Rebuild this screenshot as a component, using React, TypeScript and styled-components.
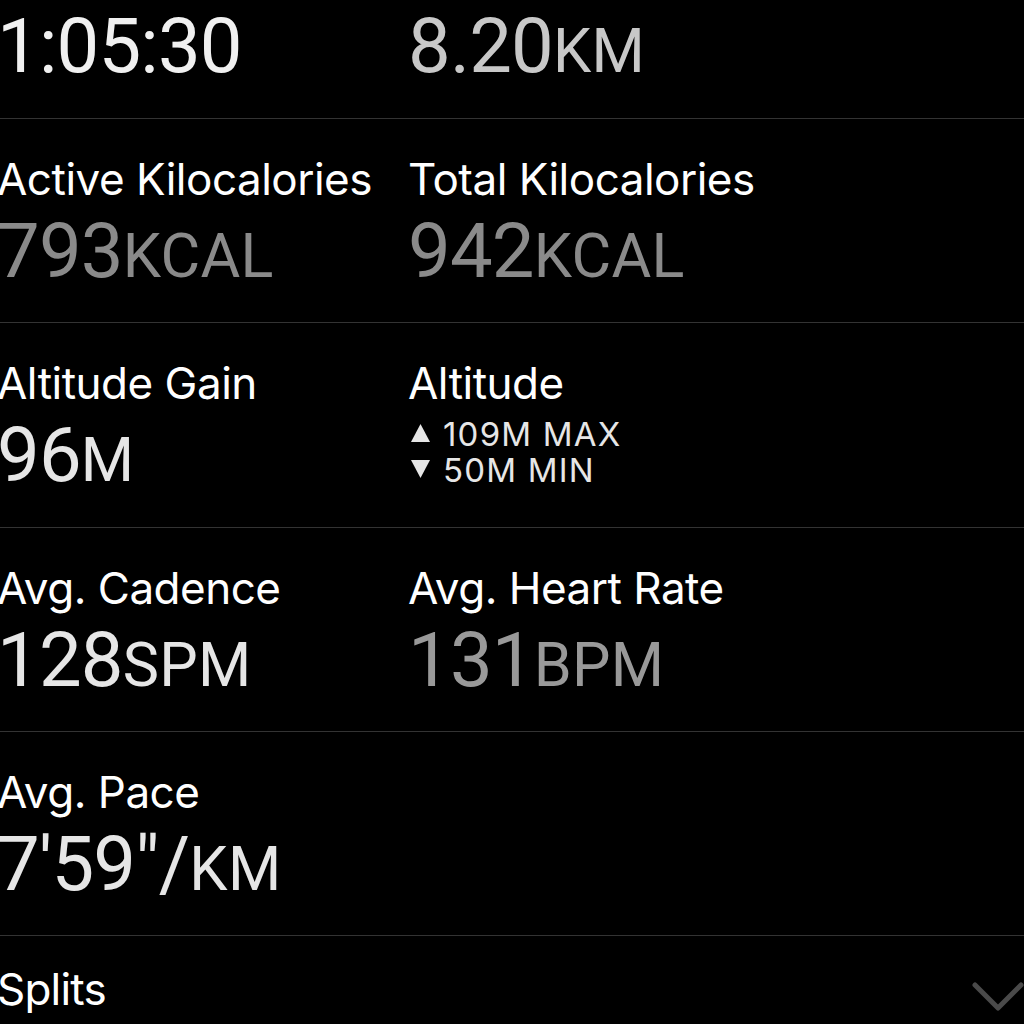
import styled, { createGlobalStyle } from "styled-components";

const GlobalStyle = createGlobalStyle`
    html, body {
        margin: 0;
        padding: 0;
        background: #000;
        overflow: hidden;
    }
    body {
        font-family: Inter, "Liberation Sans", sans-serif;
        -webkit-font-smoothing: antialiased;
    }
`;

const Page = styled.div`
    width: 1027px;
    margin-left: -3px;
    background: #000;
    color: #fff;
`;

const Row = styled.div<{ $first?: boolean }>`
    box-sizing: border-box;
    display: grid;
    grid-template-columns: 411px 1fr;
    height: ${(p) => (p.$first ? "119px" : "204.25px")};
    padding-top: ${(p) => (p.$first ? "8px" : "38px")};
    border-bottom: 1px solid #333;
`;

const Cell = styled.div`
    display: flex;
    flex-direction: column;
`;

const Label = styled.div`
    font-size: 44px;
    line-height: 45px;
    height: 45px;
    letter-spacing: -0.5px;
    color: #fff;
    white-space: nowrap;
`;

const Value = styled.div<{ $color: string; $spaced?: boolean }>`
    margin-top: ${(p) => (p.$spaced ? "11px" : "0")};
    font-family: Roboto, "Liberation Sans", sans-serif;
    font-size: 76px;
    line-height: 1;
    font-weight: 400;
    letter-spacing: -0.8px;
    color: ${(p) => p.$color};
    white-space: nowrap;
`;

const Unit = styled.span`
    font-size: 61px;
    letter-spacing: 0.3px;
`;

const Range = styled.div`
    margin-top: 10px;
    display: flex;
    flex-direction: column;
`;

const RangeLine = styled.div`
    display: flex;
    align-items: center;
    gap: 12px;
    height: 36px;
    font-size: 33px;
    line-height: 34px;
    letter-spacing: 1.2px;
    color: #e6e6e6;
    white-space: nowrap;
`;

const Arrow = styled.svg`
    width: 21px;
    height: 20px;
    flex: none;
    margin-left: 2px;
    margin-top: -3px;
`;

const SplitsRow = styled.div`
    display: flex;
    align-items: flex-start;
    justify-content: space-between;
    padding-top: 31px;
`;

const SplitsTitle = styled.div`
    font-size: 44px;
    line-height: 45px;
    letter-spacing: -0.8px;
    color: #fff;
`;

const Chevron = styled.svg`
    width: 54px;
    height: 34px;
    margin-top: 12px;
    margin-right: -1px;
`;

type Metric = {
    label?: string;
    value: string;
    unit?: string;
    color: string;
};

const Stat = ({ label, value, unit, color }: Metric) => (
    <Cell>
        {label && <Label>{label}</Label>}
        <Value $color={color} $spaced={!!label}>
            {value}
            {unit && <Unit>{unit}</Unit>}
        </Value>
    </Cell>
);

const App = () => {
    return (
        <Page>
            <GlobalStyle />
            <Row $first>
                <Stat value="1:05:30" color="#f0f0f0" />
                <Stat value="8.20" unit="KM" color="#c8c8c8" />
            </Row>
            <Row>
                <Stat label="Active Kilocalories" value="793" unit="KCAL" color="#8a8a8a" />
                <Stat label="Total Kilocalories" value="942" unit="KCAL" color="#8a8a8a" />
            </Row>
            <Row>
                <Stat label="Altitude Gain" value="96" unit="M" color="#e6e6e6" />
                <Cell>
                    <Label>Altitude</Label>
                    <Range>
                        <RangeLine>
                            <Arrow viewBox="0 0 21 20">
                                <path d="M10.5 1 L20 19 L1 19 Z" fill="#e6e6e6" />
                            </Arrow>
                            109M MAX
                        </RangeLine>
                        <RangeLine>
                            <Arrow viewBox="0 0 21 20">
                                <path d="M1 1 L20 1 L10.5 19 Z" fill="#e6e6e6" />
                            </Arrow>
                            50M MIN
                        </RangeLine>
                    </Range>
                </Cell>
            </Row>
            <Row>
                <Stat label="Avg. Cadence" value="128" unit="SPM" color="#e6e6e6" />
                <Stat label="Avg. Heart Rate" value="131" unit="BPM" color="#999" />
            </Row>
            <Row>
                <Stat label="Avg. Pace" value={"7'59\"/"} unit="KM" color="#e6e6e6" />
                <Cell />
            </Row>
            <SplitsRow>
                <SplitsTitle>Splits</SplitsTitle>
                <Chevron viewBox="0 0 54 34">
                    <path
                        d="M4 6 L27 29 L50 6"
                        fill="none"
                        stroke="#4a4a4a"
                        strokeWidth="5"
                        strokeLinecap="round"
                        strokeLinejoin="round"
                    />
                </Chevron>
            </SplitsRow>
        </Page>
    );
};

export default App;
